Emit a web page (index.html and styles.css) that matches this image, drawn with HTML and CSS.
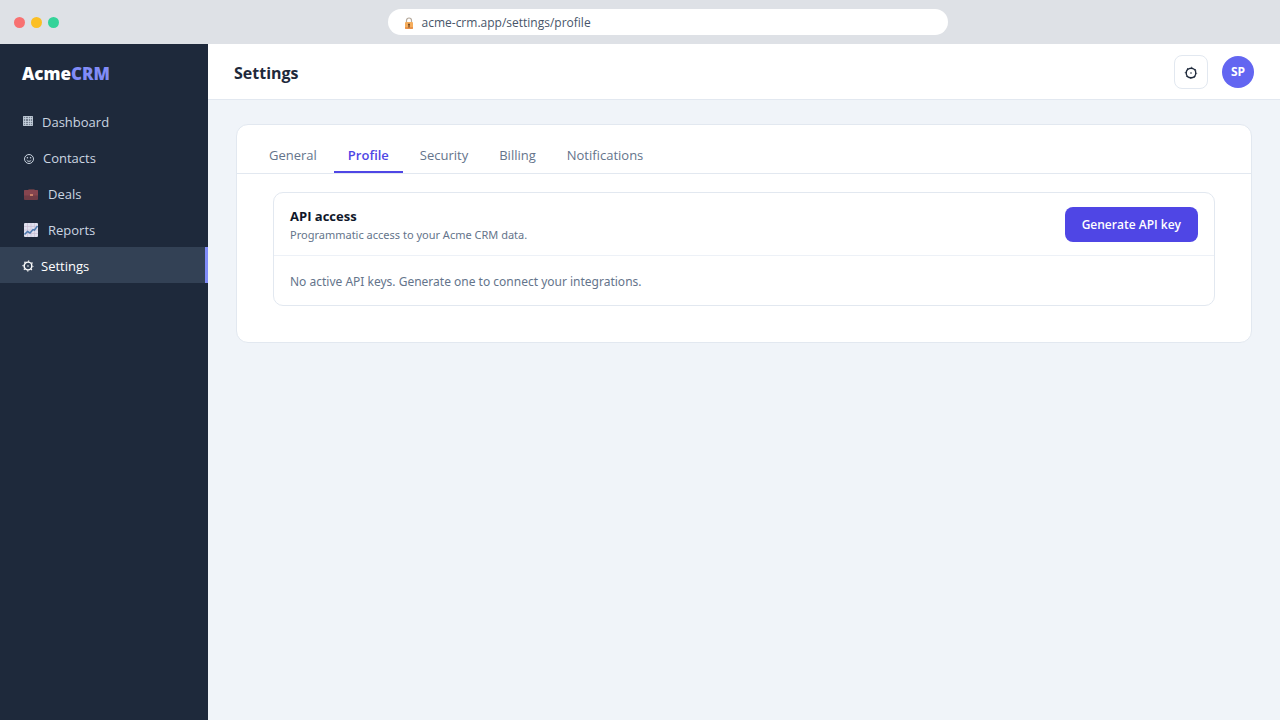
FILE: index.html
```html
<!DOCTYPE html>
<html lang="en">
<head>
    <meta charset="UTF-8">
    <meta name="viewport" content="width=device-width, initial-scale=1.0">
    <title>Acme CRM - Settings</title>
    <link rel="stylesheet" href="styles.css">
</head>
<body>
    <div class="browser-bar">
        <div class="dots">
            <span class="dot red"></span>
            <span class="dot yellow"></span>
            <span class="dot green"></span>
        </div>
        <div class="address">
            <svg class="lock" width="10" height="14" viewBox="0 0 10 14" aria-hidden="true">
                <path d="M2.5 7V4.500a2.500 2.500 0 0 1 5 0V7" fill="none" stroke="#b5a99c" stroke-width="1.200"/>
                <rect x="1" y="6" width="8" height="7" rx="1" fill="#f5ad5c"/>
                <path d="M1 11h8v1a1 1 0 0 1-1 1H2a1 1 0 0 1-1-1z" fill="#e8924a"/>
                <path d="M5 7.500a1 1 0 0 1 .6 1.800v2.200H4.400V9.300A1 1 0 0 1 5 7.500z" fill="#6b4424"/>
            </svg>
            <span>acme-crm.app/settings/profile</span>
        </div>
    </div>
    <div class="app">
        <aside class="sidebar">
            <div class="logo">Acme<span>CRM</span></div>
            <nav class="menu">
                <a href="#">
                    <svg width="13" height="14" viewBox="0 0 13 14" aria-hidden="true">
                        <rect x="1" y="1" width="10" height="10" fill="#cbd5e1" fill-opacity=".5"/>
                        <path d="M1.500 1.500h9v9h-9zM1.500 3.500h9M1.500 6.500h9M1.500 8.500h9M3.500 1.500v9M6.500 1.500v9M8.500 1.500v9" fill="none" stroke="#cbd5e1" stroke-opacity=".75"/>
                    </svg>
                    Dashboard
                </a>
                <a href="#">
                    <svg width="14" height="14" viewBox="0 0 14 14" aria-hidden="true">
                        <circle cx="7" cy="8" r="4.500" fill="none" stroke="#cbd5e1"/>
                        <circle cx="5.400" cy="6.800" r=".8" fill="#cbd5e1"/>
                        <circle cx="8.600" cy="6.800" r=".8" fill="#cbd5e1"/>
                        <path d="M4.700 9.200c1 1.500 3.600 1.500 4.600 0" fill="none" stroke="#cbd5e1"/>
                    </svg>
                    Contacts
                </a>
                <a href="#">
                    <svg width="19" height="14" viewBox="0 0 19 14" aria-hidden="true">
                        <path d="M7 4V2.500h5V4" fill="none" stroke="#5c3a44" stroke-width="1.200"/>
                        <rect x="2" y="3" width="14" height="10" rx="1" fill="#703c46"/>
                        <path d="M2 4a1 1 0 0 1 1-1h12a1 1 0 0 1 1 1v4.500H2z" fill="#86454f"/>
                        <rect x="8" y="7" width="3" height="2" fill="#c98068"/>
                    </svg>
                    Deals
                </a>
                <a href="#">
                    <svg width="19" height="14" viewBox="0 0 19 14" aria-hidden="true">
                        <rect x="2" y="0" width="14" height="14" rx="1" fill="#dfe0ee"/>
                        <path d="M2 3.500h14M2 7h14M2 10.500h14M5.500 0v14M9 0v14M12.500 0v14" stroke="#c9b9d0" stroke-width=".6"/>
                        <path d="M2.500 11.500l3-3 2.500 1.500 3-3.500 1.500.5L15.500 3" fill="none" stroke="#4b79ad" stroke-width="1.500"/>
                    </svg>
                    Reports
                </a>
                <a href="#" class="active">
                    <svg width="12" height="12" viewBox="0 0 14 14" aria-hidden="true">
                        <circle cx="7" cy="7" r="4.500" fill="none" stroke="#fff" stroke-width="1.700"/>
                        <circle cx="7" cy="7" r="5.800" fill="none" stroke="#fff" stroke-width="1.400" stroke-dasharray="1.500 3.055" stroke-dashoffset=".75"/>
                        <circle cx="7" cy="7" r=".9" fill="#fff"/>
                    </svg>
                    Settings
                </a>
            </nav>
        </aside>
        <main class="main">
            <header class="topbar">
                <h1>Settings</h1>
                <div class="actions">
                    <button class="icon-button" type="button" aria-label="Preferences">
                        <svg width="14" height="14" viewBox="0 0 14 14" aria-hidden="true">
                            <circle cx="7" cy="8" r="4.800" fill="none" stroke="#1e293b" stroke-width="1.400"/>
                            <circle cx="7" cy="8" r="5.700" fill="none" stroke="#1e293b" stroke-width="1" stroke-dasharray="1.300 3.177" stroke-dashoffset=".65"/>
                            <circle cx="7" cy="8" r=".8" fill="#1e293b"/>
                        </svg>
                    </button>
                    <div class="avatar">SP</div>
                </div>
            </header>
            <div class="content">
                <section class="card">
                    <nav class="tabs">
                        <a href="#">General</a>
                        <a href="#" class="active">Profile</a>
                        <a href="#">Security</a>
                        <a href="#">Billing</a>
                        <a href="#">Notifications</a>
                    </nav>
                    <div class="card-body">
                        <div class="panel">
                            <div class="panel-head">
                                <div>
                                    <h2>API access</h2>
                                    <p>Programmatic access to your Acme CRM data.</p>
                                </div>
                                <button class="primary" type="button">Generate API key</button>
                            </div>
                            <p class="empty">No active API keys. Generate one to connect your integrations.</p>
                        </div>
                    </div>
                </section>
            </div>
        </main>
    </div>
</body>
</html>
```
FILE: styles.css
```css
* {
    box-sizing: border-box;
}
body {
    margin: 0;
    min-height: 100vh;
    display: flex;
    flex-direction: column;
    background-color: #f0f4f9;
    color: #1e293b;
    font-family: "Segoe UI", "Open Sans", "Noto Sans", sans-serif;
    font-size: 13px;
    line-height: 18px;
}
h1, h2, p {
    margin: 0;
}
a {
    color: inherit;
    text-decoration: none;
}
button {
    font-family: inherit;
    cursor: pointer;
}
.browser-bar {
    display: flex;
    align-items: center;
    gap: 10px;
    height: 44px;
    padding: 0 14px;
    background-color: #dee1e6;
}
.dots {
    display: flex;
    gap: 6px;
}
.dot {
    width: 11px;
    height: 11px;
    border-radius: 50%;
}
.red {
    background-color: #f87171;
}
.yellow {
    background-color: #fbbf24;
}
.green {
    background-color: #34d399;
}
.address {
    flex: 1;
    display: flex;
    align-items: center;
    gap: 8px;
    max-width: 560px;
    height: 26px;
    margin: 0 auto;
    padding: 2px 16px 0;
    border-radius: 13px;
    background-color: #fff;
    color: #475569;
    font-size: 12px;
}
.app {
    flex: 1;
    display: flex;
}
.sidebar {
    flex: 0 0 208px;
    padding-top: 18px;
    background-color: #1e293b;
    color: #cbd5e1;
}
.logo {
    padding: 0 22px;
    margin-bottom: 17px;
    color: #fff;
    font-size: 17px;
    font-weight: 800;
    line-height: 24px;
}
.logo span {
    color: #818cf8;
}
.menu a {
    display: flex;
    align-items: center;
    gap: 7px;
    height: 36px;
    padding: 2px 22px 0;
}
.menu .active {
    background-color: #334155;
    border-right: 3px solid #818cf8;
    color: #fff;
}
.main {
    flex: 1;
    min-width: 0;
}
.topbar {
    display: flex;
    align-items: center;
    justify-content: space-between;
    height: 56px;
    padding: 0 26px;
    border-bottom: 1px solid #e2e8f0;
    background-color: #fff;
}
.topbar h1 {
    padding-top: 2px;
    font-size: 16px;
    font-weight: 700;
    line-height: 24px;
}
.actions {
    display: flex;
    align-items: center;
    gap: 14px;
}
.icon-button {
    display: flex;
    align-items: center;
    justify-content: center;
    width: 34px;
    height: 34px;
    padding: 0;
    border: 1px solid #e2e8f0;
    border-radius: 8px;
    background-color: #fff;
}
.avatar {
    width: 32px;
    height: 32px;
    border-radius: 50%;
    background-color: #6366f1;
    color: #fff;
    font-size: 12px;
    font-weight: 700;
    line-height: 32px;
    text-align: center;
}
.content {
    padding: 24px 28px;
}
.card {
    border: 1px solid #e2e8f0;
    border-radius: 12px;
    background-color: #fff;
}
.tabs {
    display: flex;
    gap: 3px;
    padding: 10px 18px 0;
    border-bottom: 1px solid #e2e8f0;
    color: #64748b;
}
.tabs a {
    padding: 11px 14px 9px;
}
.tabs .active {
    padding-bottom: 7px;
    border-bottom: 2px solid #4f46e5;
    color: #4f46e5;
    font-weight: 600;
}
.card-body {
    padding: 18px 36px 36px;
}
.panel {
    border: 1px solid #e2e8f0;
    border-radius: 10px;
}
.panel-head {
    display: flex;
    align-items: flex-start;
    justify-content: space-between;
    padding: 14px 16px 10px;
    border-bottom: 1px solid #edf1f7;
}
.panel-head h2 {
    color: #0f172a;
    font-size: 13px;
    font-weight: 700;
    line-height: 18px;
}
.panel-head p {
    color: #64748b;
    font-family: "Segoe UI", "Noto Sans", sans-serif;
    font-size: 11px;
    line-height: 20px;
}
.primary {
    height: 35px;
    padding: 0 17px;
    border: none;
    border-radius: 8px;
    background-color: #4f46e5;
    color: #fff;
    font-size: 12px;
    font-weight: 600;
}
.empty {
    padding: 17px 16px 14px;
    color: #64748b;
    font-family: "Segoe UI", "Noto Sans", sans-serif;
    font-size: 12px;
}
```
